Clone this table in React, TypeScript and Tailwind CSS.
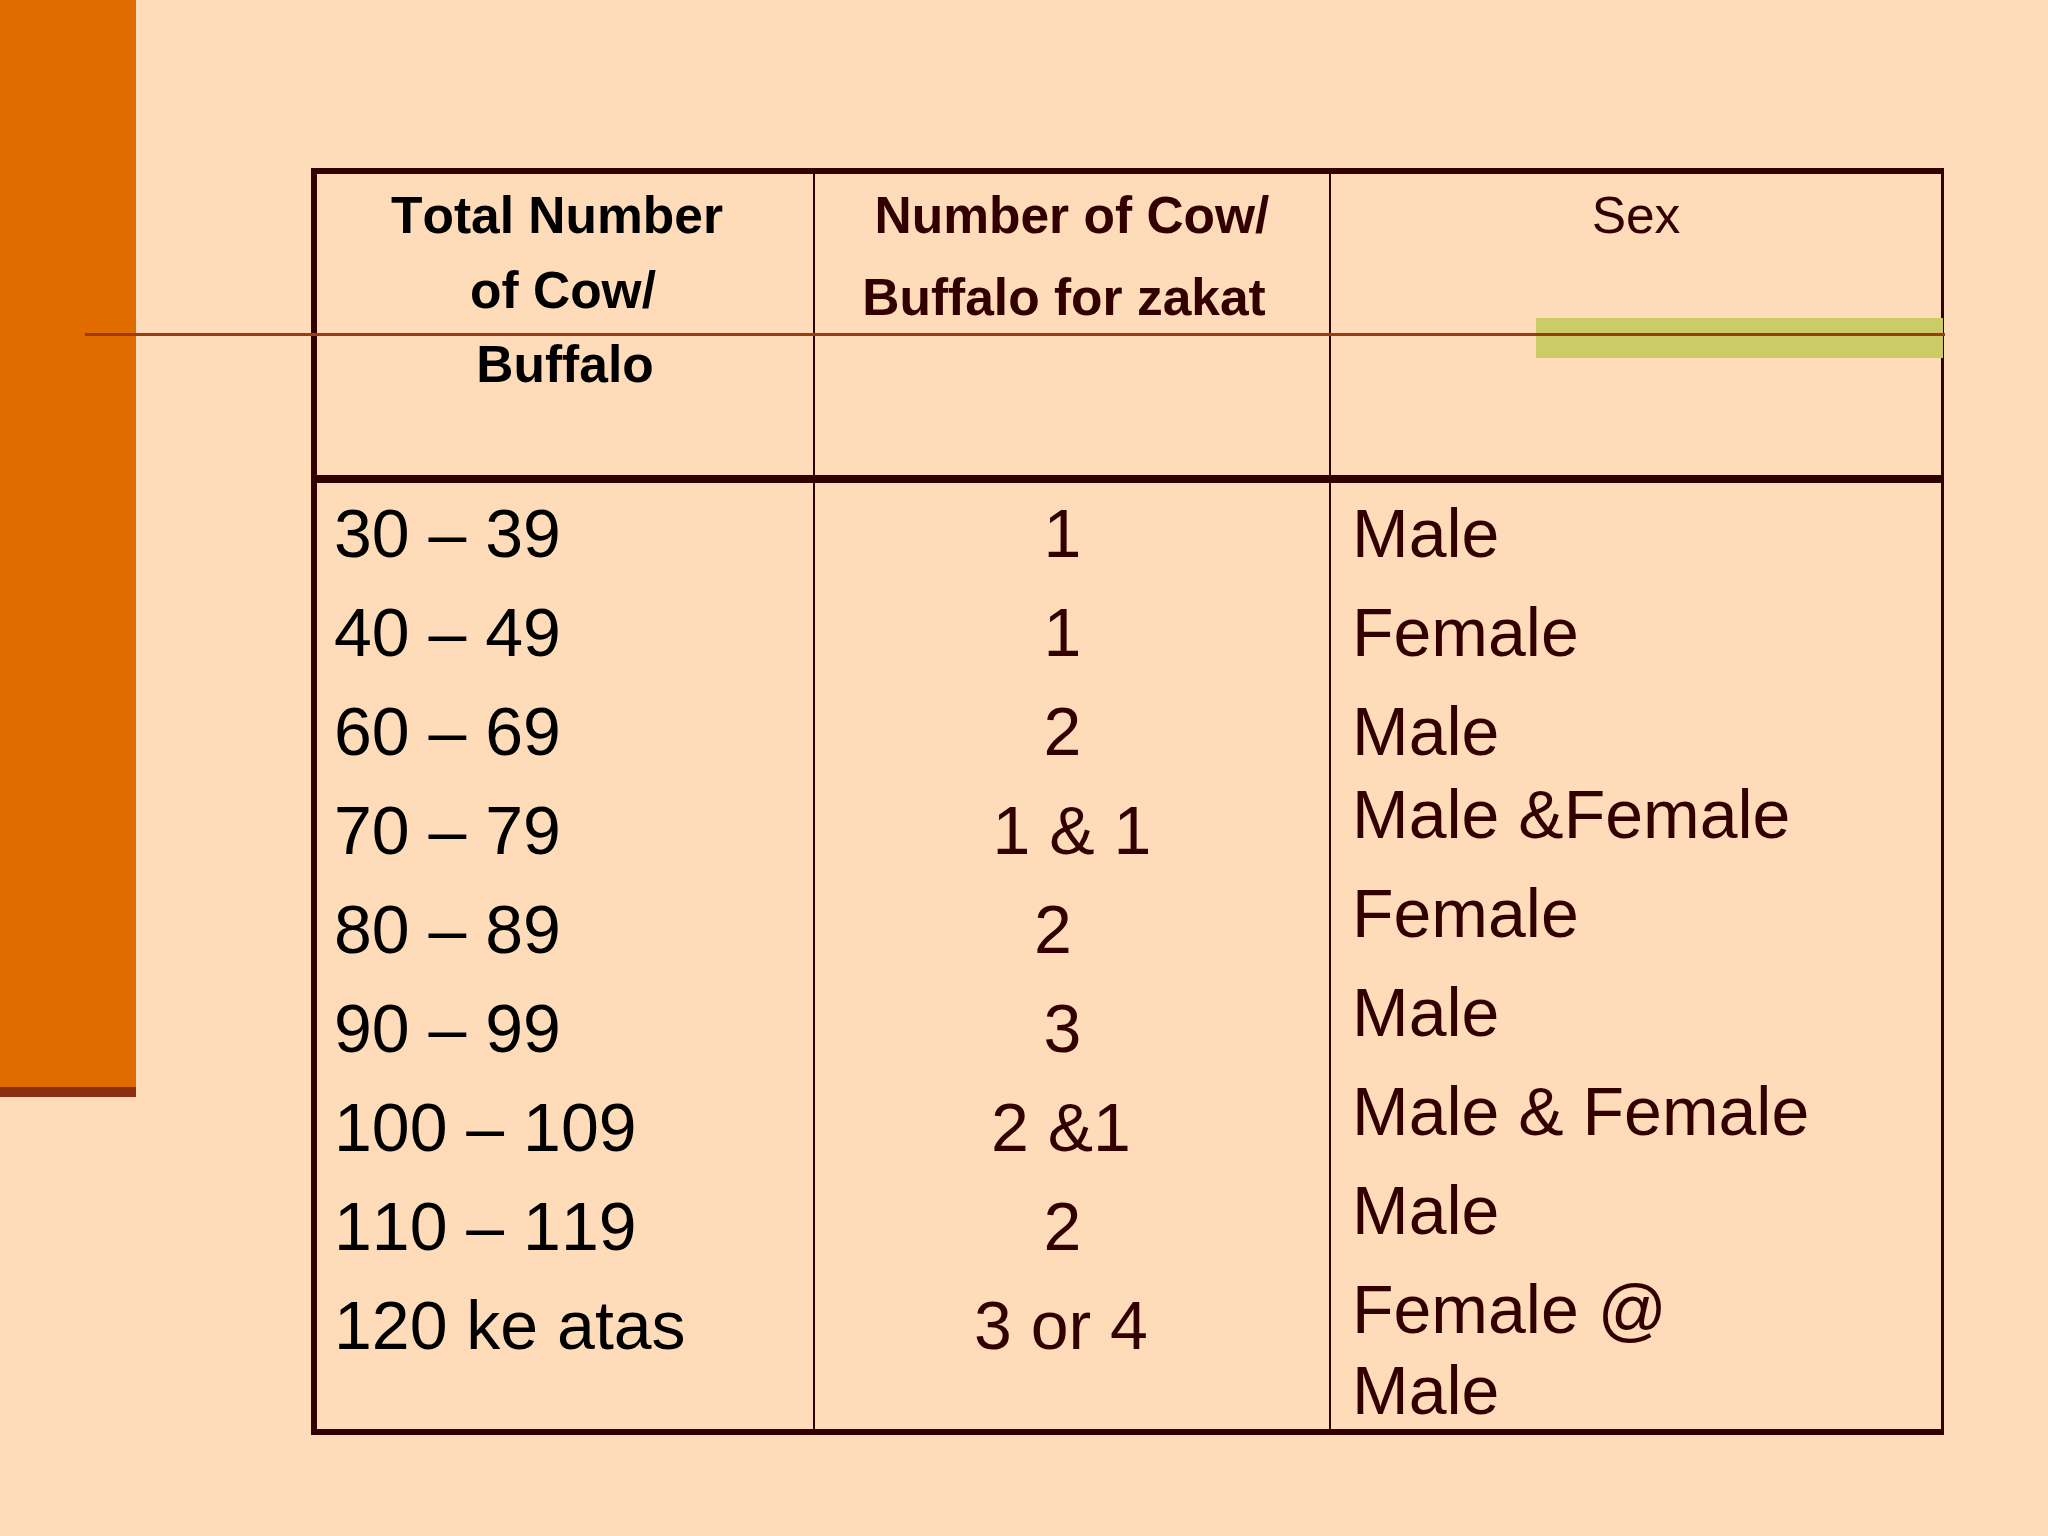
import React from "react";

const col2Rows: { t: string; pr: string }[] = [
  { t: "1", pr: "pr-[19px]" },
  { t: "1", pr: "pr-[19px]" },
  { t: "2", pr: "pr-[19px]" },
  { t: "1 & 1", pr: "pr-0" },
  { t: "2", pr: "pr-[38px]" },
  { t: "3", pr: "pr-[19px]" },
  { t: "2 &1", pr: "pr-[22px]" },
  { t: "2", pr: "pr-[19px]" },
  { t: "3 or 4", pr: "pr-[22px]" },
];

const col1Rows = [
  "30 – 39",
  "40 – 49",
  "60 – 69",
  "70 – 79",
  "80 – 89",
  "90 – 99",
  "100 – 109",
  "110 – 119",
  "120 ke atas",
];

export default function App() {
  return (
    <div className="relative w-[2048px] h-[1536px] bg-[#fedcba] flex items-start overflow-hidden font-['Liberation_Sans',Arial,sans-serif] [font-kerning:none]">
      {/* left orange band */}
      <div className="w-[136px] shrink-0 flex flex-col">
        <div className="h-[1087px] bg-[#e06c00]" />
        <div className="h-[10px] bg-[#8b2e12]" />
      </div>

      {/* table */}
      <div className="ml-[175px] mt-[168px] w-[1633px] border-l-[6px] border-t-[6px] border-r-[3px] border-b-[6px] border-[#330000]">
        {/* header */}
        <div className="grid grid-cols-[496px_516px_612px] h-[301px]">
          <div className="pt-[4px] text-center font-bold text-[51.5px] leading-[74.5px] text-black">
            <div className="pr-[16px]">Total Number</div>
            <div className="pr-[4px]">of Cow/</div>
            <div>Buffalo</div>
          </div>
          <div className="border-l-2 border-[#330000] pt-0 text-center font-bold text-[51.5px] leading-[82px] text-[#330000]">
            <div>Number of Cow/</div>
            <div className="pr-[16px]">Buffalo for zakat</div>
          </div>
          <div className="border-l-2 border-[#330000] pt-[4px] text-center text-[51.5px] leading-[74.5px] text-[#330000]">
            Sex
          </div>
        </div>
        <div className="h-[8px] bg-[#330000]" />
        {/* body */}
        <div className="grid grid-cols-[496px_516px_612px] h-[946px] text-[68px]">
          <div className="pt-[1px] pl-[17px] leading-[99px] text-black">
            {col1Rows.map((r) => (
              <div key={r} className="whitespace-nowrap">
                {r}
              </div>
            ))}
          </div>
          <div className="border-l-2 border-[#330000] pt-[1px] leading-[99px] text-center text-[#330000]">
            {col2Rows.map((r, i) => (
              <div key={i} className={`whitespace-nowrap ${r.pr}`}>
                {r.t}
              </div>
            ))}
          </div>
          <div className="border-l-2 border-[#330000] pt-[10px] pl-[21px] leading-[81px] text-[#330000]">
            <div>Male</div>
            <div className="mt-[18px]">Female</div>
            <div className="mt-[18px]">Male</div>
            <div className="mt-[2px]">Male &amp;Female</div>
            <div className="mt-[18px]">Female</div>
            <div className="mt-[18px]">Male</div>
            <div className="mt-[18px]">Male &amp; Female</div>
            <div className="mt-[18px]">Male</div>
            <div className="mt-[18px]">
              Female @
              <br />
              Male
            </div>
          </div>
        </div>
      </div>

      {/* overlays: green highlight and horizontal rule */}
      <div className="absolute left-[1536px] top-[318px] w-[407px] h-[40px] bg-[#cccc66]" />
      <div className="absolute left-[85px] top-[333px] w-[1860px] h-[3px] bg-[#9c3a12]" />
    </div>
  );
}
